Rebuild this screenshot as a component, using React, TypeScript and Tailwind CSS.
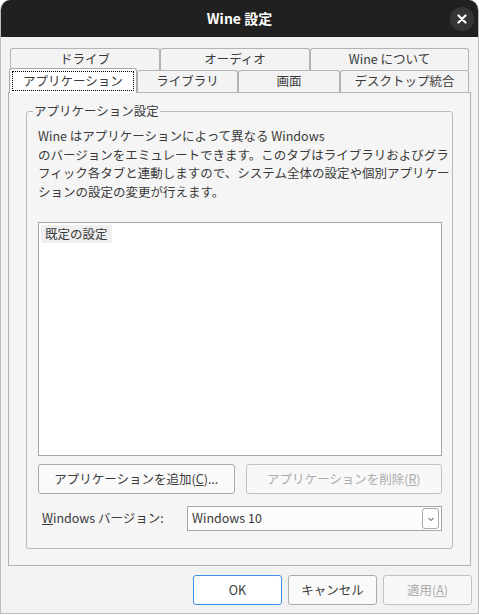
import React from "react";

const font = { fontFamily: '"Noto Sans CJK JP", "Noto Sans", sans-serif' };

function Tab({ w, children, selected }: { w: string; children: React.ReactNode; selected?: boolean }) {
  if (selected) {
    return (
      <div className={`relative z-10 -ml-[1px] -mb-[1px] h-[25px] ${w} shrink-0 rounded-t-[3px] border-x border-t border-[#a9a9a9] bg-white p-[2px]`}>
        <div className="flex h-full items-center justify-center border border-dotted border-black text-[12.5px] text-[#3a3a3a]">{children}</div>
      </div>
    );
  }
  return (
    <div className={`flex h-[22px] ${w} shrink-0 items-center justify-center rounded-t-[3px] border-x border-t border-[#b3b3b3] bg-[#f3f3f3] text-[12.5px] text-[#3a3a3a]`}>
      {children}
    </div>
  );
}

function Btn({ w, children, disabled, primary }: { w: string; children: React.ReactNode; disabled?: boolean; primary?: boolean }) {
  return (
    <div
      className={`flex h-[30px] ${w} items-center justify-center rounded-[3px] border text-[12.5px] ${
        primary ? "border-[#3d8ee8] bg-white" : disabled ? "border-[#c2c2c2] bg-[#f8f8f8]" : "border-[#ababab] bg-[#fafafa]"
      } ${disabled ? "text-[#ababab]" : "text-[#3a3a3a]"}`}
    >
      {children}
    </div>
  );
}

export default function App() {
  return (
    <div className="h-[615px] w-[479px] bg-white" style={font}>
      <div className="flex h-[614px] flex-col overflow-hidden rounded-t-[10px] border-x border-b border-[#bcbcbc] bg-[#f2f2f2]">
        {/* Title bar */}
        <div className="-mx-[1px] flex h-[37px] shrink-0 items-center justify-center bg-[#202020] relative">
          <span className="text-[14px] font-bold text-white">Wine 設定</span>
          <div className="absolute right-[5px] top-[7px] flex h-[24px] w-[24px] items-center justify-center rounded-full bg-[#353535]">
            <svg width="10" height="10" viewBox="0 0 10 10">
              <path d="M1.5 1.5 L8.5 8.5 M8.5 1.5 L1.5 8.5" stroke="white" strokeWidth="2.2" strokeLinecap="round" />
            </svg>
          </div>
        </div>

        {/* Tabs */}
        <div className="ml-[7px] mt-[11px] w-[463px]">
          <div className="flex pl-[2px]">
            <Tab w="w-[150px]">ドライブ</Tab>
            <Tab w="w-[150px]">オーディオ</Tab>
            <Tab w="w-[159px]">Wine について</Tab>
          </div>
          <div className="flex h-[22px] items-end pl-[2px]">
            <Tab w="w-[128px]" selected>アプリケーション</Tab>
            <Tab w="w-[101px]">ライブラリ</Tab>
            <Tab w="w-[102px]">画面</Tab>
            <Tab w="w-[129px]">デスクトップ統合</Tab>
          </div>

          {/* Panel */}
          <div className="h-[474px] border border-[#b3b3b3] bg-[#f5f5f5] px-[17px] pt-[18px]">
            <div className="relative rounded-[3px] border border-[#b9b9b9] pb-[17px] pl-[11px] pr-[10px] pt-[15px]">
              <span className="absolute -top-[10px] left-[6px] bg-[#f5f5f5] px-[1px] text-[12.5px] leading-[18px] text-[#3a3a3a]">
                アプリケーション設定
              </span>
              <div className="whitespace-nowrap text-[12.5px] leading-[18.5px] text-[#3a3a3a]">
                <div>Wine はアプリケーションによって異なる Windows</div>
                <div>のバージョンをエミュレートできます。このタブはライブラリおよびグラ</div>
                <div>フィック各タブと連動しますので、システム全体の設定や個別アプリケー</div>
                <div>ションの設定の変更が行えます。</div>
              </div>

              <div className="mt-[21px] flex h-[234px] flex-col items-start border border-[#a6a6a6] bg-white p-[2px]">
                <div className="flex h-[18px] items-center bg-[#efefef] px-[4px] text-[12.5px] leading-[18px] text-[#3a3a3a]">既定の設定</div>
              </div>

              <div className="mt-[8px] grid grid-cols-2 gap-[11px]">
                <Btn w="w-full">
                  アプリケーションを追加(<span className="underline">C</span>)...
                </Btn>
                <Btn w="w-full" disabled>
                  アプリケーションを削除(<span className="underline">R</span>)
                </Btn>
              </div>

              <div className="mt-[12px] flex items-center">
                <div className="w-[149px] pl-[4px] text-[12.5px] text-[#3a3a3a]">
                  <span className="underline">W</span>indows バージョン:
                </div>
                <div className="flex h-[25px] flex-1 items-center justify-between border border-[#a6a6a6] bg-[#fcfcfc] pl-[4px] pr-[2px]">
                  <span className="text-[12.5px] text-[#3a3a3a]">Windows 10</span>
                  <div className="flex h-[21px] w-[17px] items-center justify-center rounded-[3px] border border-[#ababab] bg-white">
                    <svg width="8" height="6" viewBox="0 0 8 6">
                      <path d="M1.5 2 L4 4.5 L6.5 2" stroke="#333" strokeWidth="1" fill="none" />
                    </svg>
                  </div>
                </div>
              </div>
            </div>
          </div>
        </div>

        {/* Bottom buttons */}
        <div className="mt-[9px] flex justify-end gap-[6px] pr-[6px]">
          <Btn w="w-[89px]" primary>OK</Btn>
          <Btn w="w-[89px]">キャンセル</Btn>
          <Btn w="w-[89px]" disabled>
            適用(<span className="underline">A</span>)
          </Btn>
        </div>
      </div>
    </div>
  );
}
